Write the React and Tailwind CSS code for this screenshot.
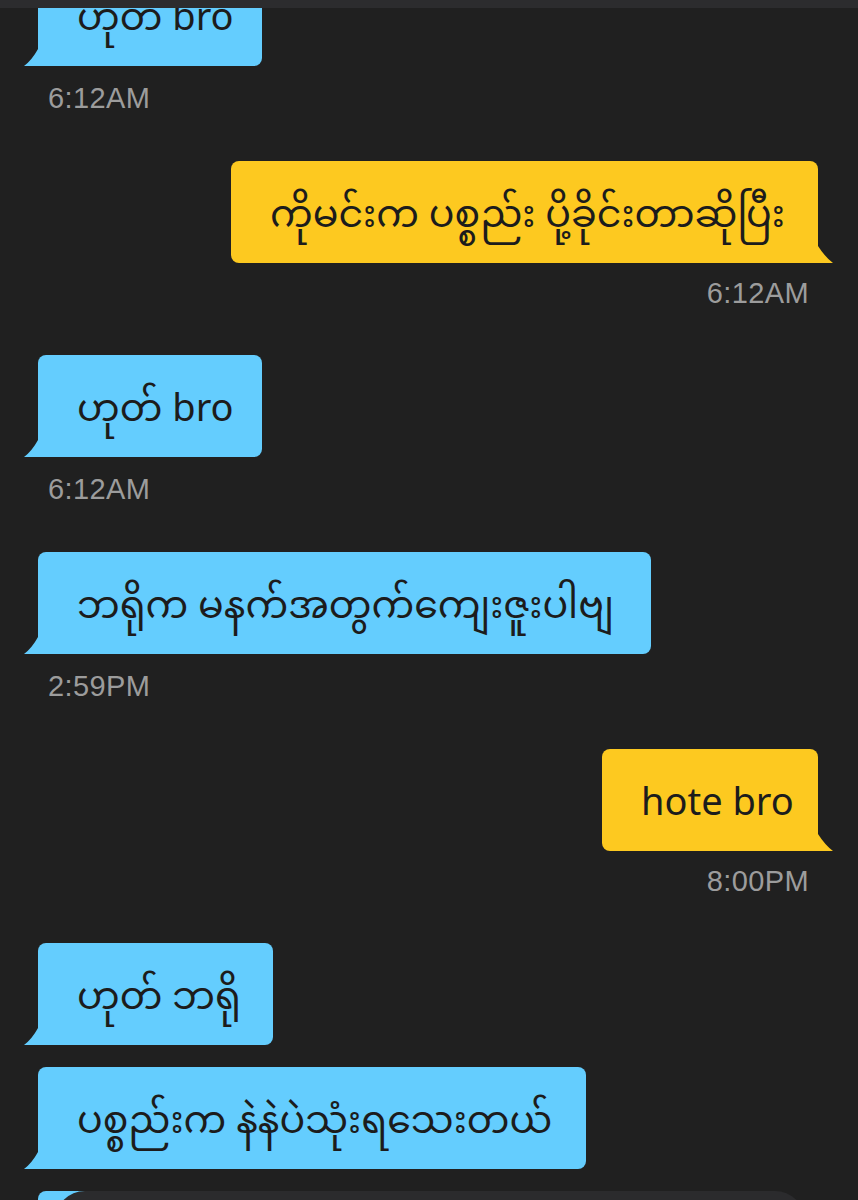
import React from "react";

const messages = [
  { id: 1, side: "in", text: "ဟုတ် bro", width: "w-[224px]", time: "6:12AM" },
  { id: 2, side: "out", text: "ကိုမင်းက ပစ္စည်း ပို့ခိုင်းတာဆိုပြီး", width: "w-[587px]", time: "6:12AM" },
  { id: 3, side: "in", text: "ဟုတ် bro", width: "w-[224px]", time: "6:12AM" },
  { id: 4, side: "in", text: "ဘရိုက မနက်အတွက်ကျေးဇူးပါဗျ", width: "w-[613px]", time: "2:59PM" },
  { id: 5, side: "out", text: "hote bro", width: "w-[216px]", time: "8:00PM" },
  { id: 6, side: "in", text: "ဟုတ် ဘရို", width: "w-[235px]" },
  { id: 7, side: "in", text: "ပစ္စည်းက နဲနဲပဲသုံးရသေးတယ်", width: "w-[548px]" },
  { id: 8, side: "in", text: "", width: "w-[662px]" },
];

const fontStack = "font-['Noto_Sans','Noto_Sans_Myanmar','Padauk','Myanmar_Text',sans-serif]";

function Bubble({ side, text, width }) {
  const isOut = side === "out";
  return (
    <div
      className={`relative ${width} h-[102px] flex items-center pl-[39px] whitespace-nowrap text-[38px] text-[#1c1c1c] ${fontStack} ${
        isOut ? "bg-[#fdc920] rounded-lg rounded-br-none" : "bg-[#64cdfe] rounded-lg rounded-bl-none"
      }`}
    >
      {text}
      {/* tail */}
      {isOut ? (
        <svg className="absolute -right-[15px] bottom-0" width="16" height="18" viewBox="0 0 16 18">
          <path d="M0 0 L1 1 Q 8 12 16 18 L0 18 Z" fill="#fdc920" />
        </svg>
      ) : (
        <svg className="absolute -left-[14px] bottom-0" width="15" height="18" viewBox="0 0 15 18">
          <path d="M15 0 L14 1 Q 8 12 0 18 L15 18 Z" fill="#64cdfe" />
        </svg>
      )}
    </div>
  );
}

function Message({ msg, next }) {
  const isOut = msg.side === "out";
  let gap = "";
  if (msg.time) gap = isOut ? "mb-[46px]" : "mb-[47px]";
  else if (next) gap = "mb-[22px]";
  return (
    <div className={`flex flex-col ${isOut ? "items-end pr-[40px]" : "items-start pl-[38px]"} ${gap}`}>
      <Bubble {...msg} />
      {msg.time && (
        <div
          className={`leading-8 text-[29px] tracking-[0.4px] text-[#9c9c9c] font-['Liberation_Sans',sans-serif] ${
            isOut ? "mr-[9px] mt-[14px]" : "ml-[10px] mt-4"
          }`}
        >
          {msg.time}
        </div>
      )}
    </div>
  );
}

export default function App() {
  return (
    <div className="relative w-[858px] h-[1200px] overflow-hidden bg-[#202020]">
      <div className="-mt-[36px]">
        {messages.map((m, i) => (
          <Message key={m.id} msg={m} next={messages[i + 1]} />
        ))}
      </div>

      {/* header strip */}
      <div className="absolute top-0 left-0 right-0 h-2 bg-[#2c2c2e]" />

      {/* input overlay */}
      <div className="absolute left-[55px] right-[53px] top-[1191px] h-[60px] rounded-[30px] bg-[#2b2b2d]" />
    </div>
  );
}
